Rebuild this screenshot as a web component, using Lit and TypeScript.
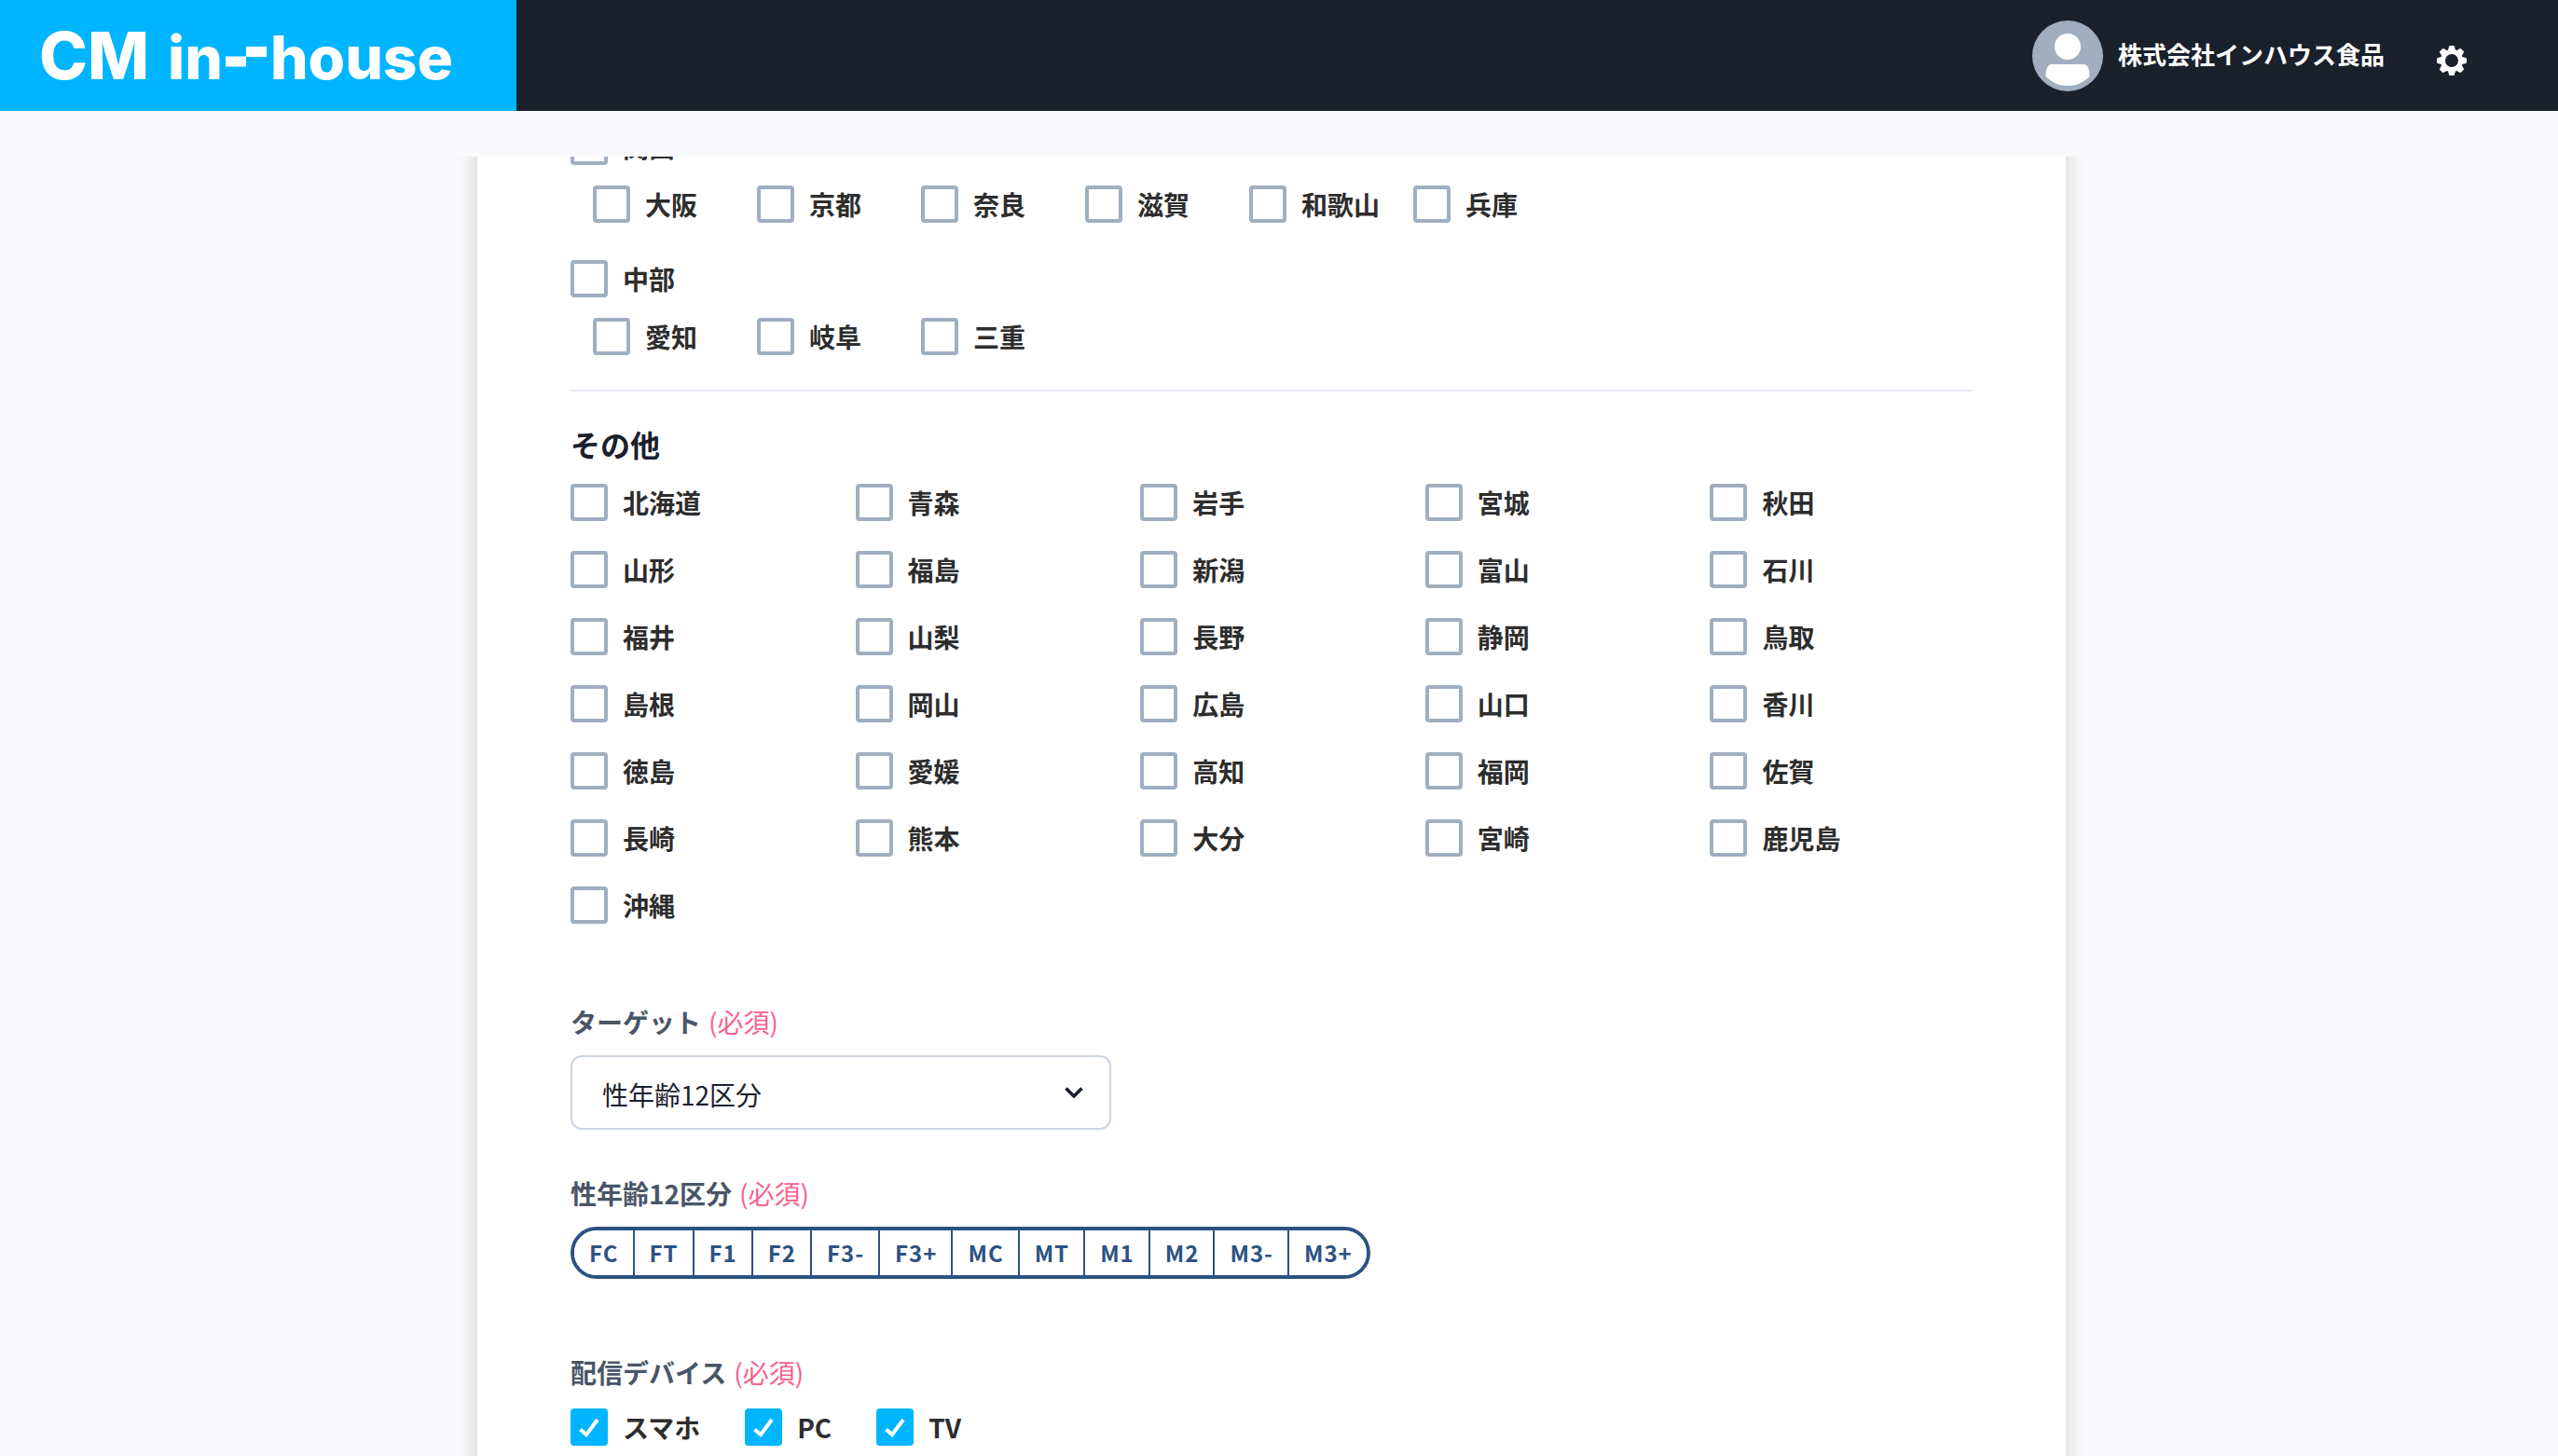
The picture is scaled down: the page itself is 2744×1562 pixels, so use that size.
import { LitElement, html, css, svg } from "lit";
import { customElement, property } from "lit/decorators.js";

const KANSAI = ["大阪", "京都", "奈良", "滋賀", "和歌山", "兵庫"];
const CHUBU = ["愛知", "岐阜", "三重"];
const OTHERS = [
  "北海道", "青森", "岩手", "宮城", "秋田",
  "山形", "福島", "新潟", "富山", "石川",
  "福井", "山梨", "長野", "静岡", "鳥取",
  "島根", "岡山", "広島", "山口", "香川",
  "徳島", "愛媛", "高知", "福岡", "佐賀",
  "長崎", "熊本", "大分", "宮崎", "鹿児島",
  "沖縄",
];
const SEGMENTS = ["FC", "FT", "F1", "F2", "F3-", "F3+", "MC", "MT", "M1", "M2", "M3-", "M3+"];
const DEVICES = ["スマホ", "PC", "TV"];

@customElement("check-item")
export class CheckItem extends LitElement {
  @property() label = "";
  @property({ type: Boolean }) checked = false;

  static styles = css`
    :host { display: block; }
    .item {
      display: flex;
      align-items: center;
      gap: 16px;
      font-size: 28px;
      line-height: 40px;
      font-weight: 700;
      color: #2d2d2d;
      white-space: nowrap;
      cursor: pointer;
    }
    .frame { display: grid; flex: none; }
    .box, .tick { grid-area: 1 / 1; }
    .box {
      appearance: none;
      box-sizing: border-box;
      width: 40px;
      height: 40px;
      margin: 0;
      border: 4px solid #a0aec0;
      border-radius: 4px;
      background: #fff;
      cursor: pointer;
    }
    .box:checked { background: #00b5ff; border-color: #00b5ff; }
    .tick { width: 40px; height: 40px; pointer-events: none; visibility: hidden; }
    .box:checked + .tick { visibility: visible; }
  `;

  render() {
    return html`<label class="item">
      <span class="frame">
        <input class="box" type="checkbox" .checked=${this.checked} />
        <svg class="tick" viewBox="0 0 40 40" aria-hidden="true">
          <path d="M10.500 22.500L17 28L29 12" fill="none" stroke="#fff" stroke-width="4" />
        </svg>
      </span>
      <span>${this.label}</span>
    </label>`;
  }
}

const tooth = (angle: number) =>
  svg`<path d="M-4.800-9L-2.800-15.500Q-2.600-16-2-16H2Q2.600-16 2.800-15.500L4.800-9Z" transform="rotate(${angle})" />`;

@customElement("app-root")
export class AppRoot extends LitElement {
  static styles = css`
    :host {
      display: flex;
      flex-direction: column;
      height: 100vh;
      background: #f9f9fb;
      color: #1a202c;
      font-family: "Noto Sans CJK JP", sans-serif;
    }
    .header {
      flex: none;
      display: flex;
      justify-content: space-between;
      height: 119px;
      background: #1a202c;
      color: #fff;
    }
    .brand {
      box-sizing: border-box;
      display: flex;
      align-items: baseline;
      width: 554px;
      padding: 20px 0 0 42px;
      background: #00b5ff;
      color: #fff;
      font-family: Inter, sans-serif;
      font-size: 64px;
      line-height: 80px;
      font-weight: 800;
      text-decoration: none;
    }
    .initials { margin-right: 20px; font-size: 70px; }
    .dash { flex: none; width: 44px; height: 35px; margin: 0 4px 0 3px; }
    .account { display: flex; align-items: center; padding-right: 98px; }
    .avatar { width: 76px; height: 76px; margin-right: 16px; }
    .company { font-size: 26px; line-height: 40px; font-weight: 700; padding-bottom: 4px; }
    .settings {
      width: 32px;
      height: 32px;
      margin: 10px 0 0 56px;
      padding: 0;
      border: 0;
      background: none;
      cursor: pointer;
    }
    .gear { display: block; width: 32px; height: 32px; }

    .scroll {
      flex: 1;
      min-height: 0;
      margin-top: 49px;
      overflow: hidden;
    }
    .card {
      box-sizing: border-box;
      width: calc(100% - 1040px);
      min-width: 1200px;
      min-height: calc(100% + 240px);
      margin: -131px auto 0 512px;
      padding: 100px;
      background: #fff;
      box-shadow: 0 0 22px rgba(0, 0, 0, 0.16);
    }
    .children { display: flex; margin: 22px 0 40px 24px; }
    .children.last { margin-bottom: 37px; }
    .child { width: 176px; }
    .others { border-top: 2px solid #e2e8f0; padding-top: 32px; }
    .title { margin: 0 0 19px; font-size: 32px; line-height: 48px; font-weight: 700; }
    .grid {
      display: grid;
      grid-template-columns: repeat(5, 1fr);
      gap: 32px 24px;
    }
    .field { margin-top: 84px; }
    .field.near { margin-top: 47px; }
    .field.devices { margin-top: 79px; }
    .name {
      display: flex;
      gap: 8px;
      margin-bottom: 15px;
      font-size: 28px;
      line-height: 42px;
      font-weight: 700;
      color: #4a5568;
    }
    .devices .name { margin-bottom: 18px; }
    .required { font-weight: 400; color: #f6628c; }
    .select { display: grid; width: 580px; }
    .picker, .chevron { grid-area: 1 / 1; }
    .picker {
      appearance: none;
      box-sizing: border-box;
      width: 100%;
      height: 80px;
      padding: 4px 80px 0 32px;
      border: 2px solid #cbd5e0;
      border-radius: 12px;
      background: #fff;
      color: #1a202c;
      font: 400 28px/42px "Noto Sans CJK JP", sans-serif;
    }
    .chevron {
      width: 20px;
      height: 12px;
      place-self: center end;
      margin-right: 30px;
      pointer-events: none;
    }
    .segments {
      display: inline-flex;
      vertical-align: top;
      border: 4px solid #2c5282;
      border-radius: 28px;
      overflow: hidden;
    }
    .segment {
      height: 48px;
      padding: 0 15px 0 16px;
      border: 0;
      border-right: 2px solid #2c5282;
      background: #fff;
      color: #2c5282;
      font: 700 24px/48px "Noto Sans CJK JP", sans-serif;
      letter-spacing: 1px;
      cursor: pointer;
    }
    .segment:last-child { border-right: 0; }
    .row { display: flex; gap: 48px; }
  `;

  render() {
    return html`
      <header class="header">
        <a class="brand" href="#" aria-label="CM in-house">
          <span class="initials">CM</span>
          <span>in</span>
          <svg class="dash" viewBox="0 0 44 35" aria-hidden="true"><path d="M0 10.500h22V0h22v11H22v10.500H0z" fill="#fff" /></svg>
          <span>house</span>
        </a>
        <div class="account">
          <svg class="avatar" viewBox="0 0 76 76" aria-hidden="true">
            <circle cx="38" cy="38" r="38" fill="#a0aec0" />
            <circle cx="38" cy="28" r="14" fill="#fff" />
            <path d="M20 47H56Q61.500 48 61.500 60Q52 70 38 70T14.500 60Q14.500 48 20 47Z" fill="#fff" />
          </svg>
          <span class="company">株式会社インハウス食品</span>
          <button class="settings" aria-label="設定">
            <svg class="gear" viewBox="-16 -16 32 32" fill="#fff" aria-hidden="true">
              <circle r="9.500" fill="none" stroke="#fff" stroke-width="5" />
              ${[0, 45, 90, 135, 180, 225, 270, 315].map(tooth)}
            </svg>
          </button>
        </div>
      </header>
      <main class="scroll">
        <form class="card">
          <check-item label="関西"></check-item>
          <div class="children">
            ${KANSAI.map((n) => html`<check-item class="child" label=${n}></check-item>`)}
          </div>
          <check-item label="中部"></check-item>
          <div class="children last">
            ${CHUBU.map((n) => html`<check-item class="child" label=${n}></check-item>`)}
          </div>
          <section class="others">
            <h2 class="title">その他</h2>
            <div class="grid">
              ${OTHERS.map((n) => html`<check-item label=${n}></check-item>`)}
            </div>
          </section>
          <section class="field">
            <label class="name" for="target">ターゲット<span class="required">(必須)</span></label>
            <div class="select">
              <select class="picker" id="target"><option>性年齢12区分</option></select>
              <svg class="chevron" viewBox="0 0 20 12" aria-hidden="true">
                <path d="M1.500 1.500L10 10L18.500 1.500" fill="none" stroke="#1a202c" stroke-width="3.600" />
              </svg>
            </div>
          </section>
          <section class="field near">
            <div class="name" id="segment-name">性年齢12区分<span class="required">(必須)</span></div>
            <div class="segments" role="group" aria-labelledby="segment-name">
              ${SEGMENTS.map((s) => html`<button class="segment" type="button">${s}</button>`)}
            </div>
          </section>
          <section class="field devices">
            <div class="name" id="device-name">配信デバイス<span class="required">(必須)</span></div>
            <div class="row" role="group" aria-labelledby="device-name">
              ${DEVICES.map((d) => html`<check-item label=${d} checked></check-item>`)}
            </div>
          </section>
        </form>
      </main>
    `;
  }
}
